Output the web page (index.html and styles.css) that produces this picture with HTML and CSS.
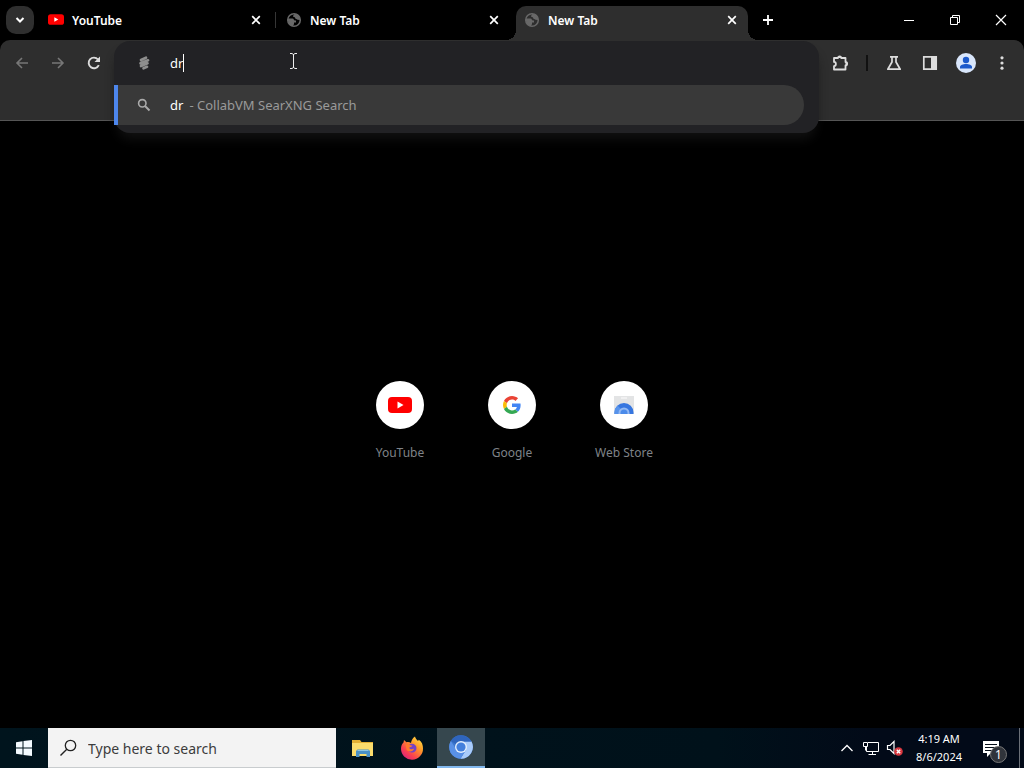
FILE: index.html
```html
<!DOCTYPE html>
<html lang="en">
<head>
<meta charset="utf-8">
<title>New Tab</title>
<link rel="stylesheet" href="styles.css">
</head>
<body>
<svg class="defs" width="0" height="0" aria-hidden="true">
  <symbol id="close" viewBox="0 0 16 16"><path d="M4.200 4.200l7.600 7.600M11.800 4.200l-7.600 7.600" stroke="currentColor" stroke-width="1.700" fill="none"/></symbol>
  <symbol id="globe" viewBox="0 0 16 16"><circle cx="8" cy="8" r="6.300" fill="none" stroke="currentColor" stroke-width="1.500"/><path d="M2 6.500h4.500c1.500 0 1 2 2.500 2h1v2H8v1.500c0 1-1 1-1 2.200C4 14 1.500 11 2 6.500zM8.500 1.800C8.500 3 7 3 7 4.200c0 1 2 .5 2 1.600 0 1.400 2 1 2.500 2l2.800.2C14.300 4.500 11.800 2 8.500 1.800z" fill="currentColor"/></symbol>
  <symbol id="youtube" viewBox="0 0 24 16"><rect width="24" height="16" rx="4" fill="#f00"/><path d="M9.500 4.500l6 3.500-6 3.500z" fill="#fff"/></symbol>
</svg>

<header class="tabstrip">
  <button class="tab-search" aria-label="Search tabs"><svg width="12" height="12" viewBox="0 0 12 12"><path d="M2.500 4L6 7.500 9.500 4" fill="none" stroke="currentColor" stroke-width="2"/></svg></button>
  <nav class="tabs" aria-label="Tabs">
    <div class="tab"><svg class="tab-icon" viewBox="0 0 16 16"><use href="#youtube" width="16" height="11" y="2"/></svg><span class="tab-title">YouTube</span><button class="tab-close" aria-label="Close tab"><svg width="16" height="16"><use href="#close"/></svg></button></div>
    <span class="tab-divider"></span>
    <div class="tab"><svg class="tab-icon" viewBox="0 0 16 16"><use href="#globe"/></svg><span class="tab-title">New Tab</span><button class="tab-close" aria-label="Close tab"><svg width="16" height="16"><use href="#close"/></svg></button></div>
    <span class="tab-divider tab-divider-hidden"></span>
    <div class="tab tab-active"><svg class="tab-icon" viewBox="0 0 16 16"><use href="#globe"/></svg><span class="tab-title">New Tab</span><button class="tab-close" aria-label="Close tab"><svg width="16" height="16"><use href="#close"/></svg></button></div>
  </nav>
  <button class="new-tab" aria-label="New tab"><svg width="12" height="12" viewBox="0 0 12 12"><path d="M6 1v10M1 6h10" stroke="currentColor" stroke-width="1.800"/></svg></button>
  <div class="window-controls">
    <button aria-label="Minimize"><svg width="12" height="12" viewBox="0 0 12 12"><path d="M1 6.500h10" stroke="currentColor"/></svg></button>
    <button aria-label="Restore"><svg width="12" height="12" viewBox="0 0 12 12"><path d="M1.500 3.500h7v7h-7zM3.500 3.500v-2h7v7h-2" fill="none" stroke="currentColor"/></svg></button>
    <button aria-label="Close"><svg width="12" height="12" viewBox="0 0 12 12"><path d="M1 1l10 10M11 1L1 11" stroke="currentColor" stroke-width="1.200"/></svg></button>
  </div>
</header>

<div class="toolbar">
  <button class="tool tool-dim" aria-label="Back"><svg width="16" height="16" viewBox="0 0 16 16"><path d="M14 8H3M8 3L3 8l5 5" fill="none" stroke="currentColor" stroke-width="1.600"/></svg></button>
  <button class="tool tool-dim" aria-label="Forward"><svg width="16" height="16" viewBox="0 0 16 16"><path d="M2 8h11M8 3l5 5-5 5" fill="none" stroke="currentColor" stroke-width="1.600"/></svg></button>
  <button class="tool" aria-label="Reload"><svg width="16" height="16" viewBox="0 0 16 16"><path d="M12.800 10.200A5.300 5.300 0 1 1 12 4.500" fill="none" stroke="currentColor" stroke-width="1.900"/><path d="M14 1.500V7H8.500z" fill="currentColor"/></svg></button>
  <div class="omnibox-slot">
    <div class="omnibox">
      <div class="omnibox-field">
        <svg class="field-icon" width="16" height="16" viewBox="0 0 16 16"><path d="M5 5l5-2.300M4.500 8.300l7.500-3M5 11l6.500-2.700M7.500 13.300l3.500-1.500" stroke="#8e8e8e" stroke-width="2.700" stroke-linecap="round"/></svg>
        <input class="address" type="text" value="dr" size="2" aria-label="Address and search bar"><span class="caret"></span>
        <svg class="pointer" width="11" height="18" viewBox="0 0 11 18"><path d="M2 1.500h2l1.500 1 1.500-1h2M2 16.500h2l1.500-1 1.500 1h2M5.500 2v14" fill="none" stroke="#eee"/></svg>
      </div>
      <button class="suggestion">
        <svg class="field-icon" width="16" height="16" viewBox="0 0 16 16"><circle cx="6.300" cy="6.300" r="3.700" fill="none" stroke="#aaa" stroke-width="1.600"/><path d="M9 9l4.500 4.500" stroke="#aaa" stroke-width="2"/></svg>
        <span class="suggestion-text">dr</span><span class="suggestion-hint">- CollabVM SearXNG Search</span>
      </button>
    </div>
  </div>
  <button class="tool" aria-label="Extensions"><svg width="18" height="18" viewBox="0 0 18 18"><path d="M3 4h4a1.600 1.600 0 0 1 3.200 0H14.500v4a1.600 1.600 0 0 1 0 3.300V15.500H3v-3.400c2.500-.2 2.500-4 0-4.200z" fill="none" stroke="currentColor" stroke-width="1.800" stroke-linejoin="round"/><path d="M7 4a1.600 1.600 0 0 1 3.200 0zM14.500 8a1.600 1.600 0 0 1 0 3.300z" fill="currentColor"/></svg></button>
  <span class="tool-divider"></span>
  <button class="tool" aria-label="Experiments"><svg width="16" height="16" viewBox="0 0 16 16"><path d="M4 1.800h8M6 2v5L1.800 14.200h12.400L10 7V2" fill="none" stroke="currentColor" stroke-width="1.700" stroke-linejoin="round"/></svg></button>
  <button class="tool" aria-label="Side panel"><svg width="16" height="16" viewBox="0 0 16 16"><path d="M1.800 1.800h12.400v12.400H1.800z" fill="none" stroke="currentColor" stroke-width="1.700"/><path d="M9 1h6v14H9z" fill="currentColor"/></svg></button>
  <button class="tool" aria-label="Profile"><svg width="20" height="20" viewBox="0 0 20 20"><circle cx="10" cy="10" r="10" fill="#d9e6fb"/><circle cx="10" cy="7" r="3.200" fill="#1c59cb"/><path d="M4 15.500V14c0-2 3-3 6-3s6 1 6 3v1.500z" fill="#1c59cb"/></svg></button>
  <button class="tool" aria-label="Menu"><svg width="16" height="16" viewBox="0 0 16 16" fill="currentColor"><circle cx="8" cy="2.800" r="1.600"/><circle cx="8" cy="8" r="1.600"/><circle cx="8" cy="13.200" r="1.600"/></svg></button>
</div>

<main class="page">
  <a class="tile" href="#"><span class="tile-icon"><svg width="24" height="16"><use href="#youtube"/></svg></span><span>YouTube</span></a>
  <a class="tile" href="#"><span class="tile-icon"><svg width="18" height="18" viewBox="0 0 48 48"><path fill="#EA4335" d="M24 9.500c3.540 0 6.710 1.220 9.210 3.600l6.850-6.850C35.900 2.380 30.470 0 24 0 14.620 0 6.510 5.380 2.560 13.220l7.980 6.190C12.430 13.720 17.740 9.500 24 9.500z"/><path fill="#4285F4" d="M46.980 24.550c0-1.570-.15-3.090-.38-4.550H24v9.020h12.940c-.58 2.960-2.260 5.480-4.780 7.180l7.730 6c4.510-4.180 7.090-10.360 7.090-17.650z"/><path fill="#FBBC05" d="M10.530 28.590A14.500 14.500 0 0 1 9.770 24c0-1.600.27-3.140.76-4.590l-7.980-6.190A23.900 23.900 0 0 0 0 24c0 3.880.92 7.540 2.560 10.780z"/><path fill="#34A853" d="M24 48c6.480 0 11.930-2.130 15.890-5.810l-7.730-6c-2.150 1.450-4.920 2.300-8.160 2.300-6.260 0-11.570-4.220-13.470-9.910l-7.980 6.190C6.510 42.620 14.620 48 24 48z"/></svg></span><span>Google</span></a>
  <a class="tile" href="#"><span class="tile-icon"><svg width="22" height="20" viewBox="0 0 22 20"><path d="M1 1h20v18H1z" fill="#e3e4e5"/><path d="M8 3h6" stroke="#f4f4f4" stroke-width="1.500"/><path d="M1.500 19V17.500a9.500 9.500 0 0 1 19 0V19z" fill="#3676e0"/><path d="M1.500 19v-1.500a9.500 9.500 0 0 1 3-7L9 15v4z" fill="#5793eb"/><path d="M5.500 19v-1a5.500 5.500 0 0 1 11 0v1z" fill="#93b9f3"/><path d="M7.500 19v-1a3.500 3.500 0 0 1 7 0v1z" fill="#4b8bea"/></svg></span><span>Web Store</span></a>
</main>

<footer class="taskbar">
  <button class="task start" aria-label="Start"><svg width="16" height="16" viewBox="0 0 16 16" fill="#f4fbff"><path d="M0 2.200L6.500 1.300v6.200H0zM7.500 1.100L16 0v7.500H7.500zM0 8.500h6.500v6.200L0 13.800zM7.500 8.500H16V16l-8.500-1.100z"/></svg></button>
  <label class="search"><svg width="18" height="18" viewBox="0 0 18 18"><circle cx="10.500" cy="6.500" r="5.200" fill="none" stroke="#222" stroke-width="1.300"/><path d="M6.800 10.300L.5 16.600" stroke="#222" stroke-width="1.400"/></svg><input class="search-input" type="text" placeholder="Type here to search" aria-label="Type here to search"></label>
  <div class="apps">
    <button class="task" aria-label="File Explorer"><svg width="24" height="20" viewBox="0 0 24 20"><path d="M1 2h8l1.500 2H22v14H1z" fill="#e4b034"/><path d="M1 5h21v13H1z" fill="#fbdc6c"/><path d="M5 19v-6l1.500-1.500h11L19 13v6h-3.500v-3h-7v3z" fill="#4a91c6"/><path d="M6.500 12.500h11" stroke="#8dc5e4"/></svg></button>
    <button class="task" aria-label="Firefox"><svg width="24" height="24" viewBox="0 0 24 24"><defs><linearGradient id="fx" x1="1" y1="0" x2="0.200" y2="1"><stop offset="0" stop-color="#fff04e"/><stop offset=".4" stop-color="#ff9a28"/><stop offset=".75" stop-color="#fa3f50"/><stop offset="1" stop-color="#d8237c"/></linearGradient></defs><path d="M1 13c0-3 .8-5 2.500-6.500L4 4l2.500 2.300C8 5.700 9.500 6 11 7c.3-2.500 1.500-5 4-6.500.3 2 1.800 3 3 4.500l.8-1.200C22 6 23 9 23 12.500A11 11 0 0 1 1 13z" fill="url(#fx)"/><path d="M9 8.500c3.500-1.800 7.500 0 7.500 3.500s-3 5.500-6 4.200C7.500 15 7 11 9 8.500z" fill="#7542c6"/><path d="M5.500 8.500c2-1 4-.5 5 .8l2 .4c-.5 1.500-3 1-3.300 2.300 1 1.500 3 1.800 5 .5-1 3-5 4-7.500 1.500z" fill="#ff7a2c"/></svg></button>
    <button class="task task-active" aria-label="Chromium"><svg width="24" height="24" viewBox="0 0 24 24"><circle cx="12" cy="12" r="11.800" fill="#3b76cd"/><path d="M12 6.500h10.500A11.800 11.800 0 0 1 11.500 23.800L17 15z" fill="#a9cbfa"/><path d="M1.800 6A11.800 11.800 0 0 1 22.300 6.500H12L7 9z" fill="#2f65bd"/><path d="M1.800 6A11.800 11.800 0 0 0 11.500 23.800L16.500 15 8 15.500z" fill="#5990e6"/><circle cx="12" cy="12" r="6" fill="#e3eefd"/><circle cx="12" cy="12" r="4.600" fill="#437fdc"/></svg></button>
  </div>
  <div class="tray">
    <button class="tray-button" aria-label="Show hidden icons"><svg width="14" height="14" viewBox="0 0 14 14"><path d="M1.500 10L7 4.500l5.500 5.500" fill="none" stroke="#fff" stroke-width="1.300"/></svg></button>
    <button class="tray-button" aria-label="Network"><svg width="18" height="16" viewBox="0 0 18 16"><path d="M6 2.500h10.500v9H4.500V7M10.500 11.500v3M6.500 14.500H14M1.500 2.500h4v4h-4zM3.500 6.500v4" fill="none" stroke="#fff"/></svg></button>
    <button class="tray-button" aria-label="Volume muted"><svg width="18" height="16" viewBox="0 0 18 16"><path d="M1.500 5.500H4l4-4v12l-4-4H1.500z" fill="none" stroke="#fff" stroke-width="1.200"/><circle cx="12.500" cy="11.500" r="4.300" fill="#d8373f"/><path d="M10.800 9.800l3.400 3.400M14.200 9.800l-3.400 3.400" stroke="#fff" stroke-width="1.400"/></svg></button>
    <time class="clock"><span>4:19 AM</span><span>8/6/2024</span></time>
    <button class="notifications" aria-label="Notifications"><svg width="18" height="17" viewBox="0 0 18 17"><path d="M1 1h16v12H9l-4 4v-4H1z" fill="#fff"/><path d="M3 4.500h12M3 7.500h12M3 10.500h8" stroke="#07101b"/></svg><span class="badge">1</span></button>
    <span class="show-desktop"></span>
  </div>
</footer>
</body>
</html>
```
FILE: styles.css
```css
* { box-sizing: border-box; }

body {
  margin: 0;
  min-height: 100vh;
  display: flex;
  flex-direction: column;
  background: #000;
  color: #fff;
  font: 12px/16px "Noto Sans", "Open Sans", sans-serif;
}

button, input { font: inherit; color: inherit; }
button {
  display: flex;
  align-items: center;
  justify-content: center;
  padding: 0;
  border: 0;
  background: none;
}
svg { flex: none; }
.defs { position: absolute; }

/* Tab strip */
.tabstrip { display: flex; align-items: center; height: 40px; padding-left: 6px; }
.tab-search { width: 28px; height: 28px; border-radius: 10px; background: #2f2f2f; margin-right: 6px; }
.tabs { display: flex; align-self: stretch; align-items: center; flex: 0 1 708px; min-width: 0; }
.tab {
  position: relative;
  flex: 1;
  min-width: 0;
  height: 34px;
  align-self: flex-end;
  display: flex;
  align-items: center;
  gap: 8px;
  padding: 0 8px 6px;
}
.tab-active { background: #2e2e2e; border-radius: 10px 10px 0 0; }
.tab-active::before, .tab-active::after {
  content: "";
  position: absolute;
  bottom: 0;
  width: 10px;
  height: 10px;
}
.tab-active::before { right: 100%; background: radial-gradient(circle at 0 0, transparent 10px, #2e2e2e 10px); }
.tab-active::after { left: 100%; background: radial-gradient(circle at 100% 0, transparent 10px, #2e2e2e 10px); }
.tab-icon { width: 16px; height: 16px; color: #686868; }
.tab-title { flex: 1; padding-top: 2px; font-weight: 600; }
.tab-close { width: 16px; height: 16px; }
.tab-divider { width: 1px; height: 16px; margin: 0 2px 0 3px; background: #363636; }
.tab-divider-hidden { visibility: hidden; }
.new-tab { width: 28px; height: 28px; margin-left: 6px; }
.window-controls { display: flex; align-self: stretch; margin-left: auto; }
.window-controls button { width: 46px; }

/* Toolbar and address bar */
.toolbar {
  display: flex;
  height: 81px;
  padding: 5px 4px 0;
  background: #2e2e2e;
  border-bottom: 1px solid #555;
  border-radius: 10px 10px 0 0;
}
.tool { width: 36px; height: 36px; color: #ddd; }
.tool-dim { color: #777; }
.tool-divider { width: 2px; height: 16px; margin: 10px 8px; background: #111; }
.omnibox-slot { position: relative; flex: 1; min-width: 0; margin: 0 3px 0 2px; }
.omnibox {
  position: absolute;
  top: -4px;
  left: 0;
  right: 0;
  padding-bottom: 8px;
  background: #222225;
  border-radius: 16px;
  box-shadow: 0 10px 12px -4px #111;
  font-size: 13px;
  line-height: 18px;
}
.omnibox-field { position: relative; display: flex; align-items: center; height: 44px; padding-left: 22px; }
.field-icon { margin-right: 18px; }
.address { width: auto; field-sizing: content; padding: 0; border: 0; outline: 0; background: none; }
.caret { width: 1px; height: 18px; background: #fff; }
.pointer { position: absolute; left: 174px; top: 11px; }
.suggestion {
  width: calc(100% - 15px);
  height: 40px;
  justify-content: flex-start;
  padding-left: 18px;
  border-left: 4px solid #4d86ec;
  border-radius: 0 20px 20px 0;
  background: #393939;
}
.suggestion-hint { margin-left: 6px; color: #9a9a9a; white-space: nowrap; }

/* New tab page */
.page { flex: 1; display: flex; align-items: center; justify-content: center; padding-bottom: 6px; }
.tile {
  width: 112px;
  display: flex;
  flex-direction: column;
  align-items: center;
  gap: 14px;
  color: #7f8388;
  line-height: 20px;
  text-decoration: none;
}
.tile-icon { display: grid; place-items: center; width: 48px; height: 48px; border-radius: 50%; background: #fff; }

/* Taskbar */
.taskbar { display: flex; height: 40px; background: linear-gradient(90deg, #00141d, #00111a 70%, #020a18 85%); }
.task { width: 48px; height: 40px; }
.search { display: flex; align-items: center; flex: 0 1 288px; gap: 10px; padding-left: 12px; background: #f3f3f3; border: 1px solid #c8ccce; border-width: 0 0 1px; }
.search-input { flex: 1; min-width: 0; padding: 2px 0 0; border: 0; outline: 0; background: none; font-size: 14px; line-height: 20px; }
.search-input::placeholder { color: #3c3c3c; opacity: 1; }
.apps { display: flex; gap: 1px; margin-left: 3px; }
.task-active { background: #36474e; border-bottom: 2px solid #82b8ee; }
.tray { display: flex; align-items: center; margin-left: auto; }
.tray-button { width: 24px; height: 40px; }
.clock { display: flex; flex-direction: column; align-items: center; width: 64px; font-size: 11px; line-height: 18px; }
.notifications { position: relative; width: 40px; height: 40px; }
.badge {
  position: absolute;
  left: 19px;
  top: 18px;
  width: 17px;
  height: 17px;
  border: 1px solid #777;
  border-radius: 50%;
  background: #30343b;
  line-height: 15px;
  text-align: center;
}
.show-desktop { align-self: stretch; width: 5px; margin-left: 8px; border-left: 1px solid #6b7078; }
```
